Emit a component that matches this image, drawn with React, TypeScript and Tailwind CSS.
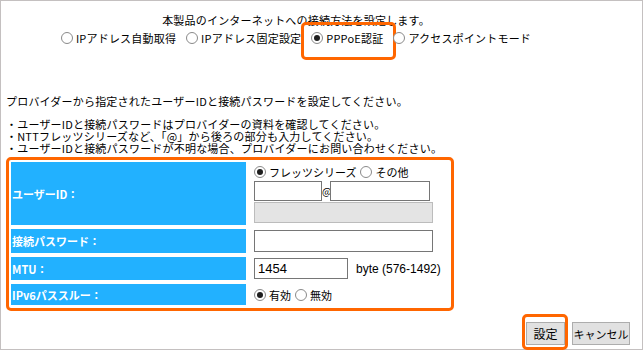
import React from "react";

function Radio({ checked }: { checked?: boolean }) {
  return (
    <span className="flex h-[12px] w-[12px] shrink-0 items-center justify-center rounded-full border border-[#8a8a8a] bg-white">
      {checked && <span className="h-[6px] w-[6px] rounded-full bg-[#1e1e1e]" />}
    </span>
  );
}

function Option({ label, checked }: { label: string; checked?: boolean }) {
  return (
    <span className="flex items-center gap-[3px] whitespace-nowrap">
      <Radio checked={checked} />
      <span>{label}</span>
    </span>
  );
}

const modes = [
  { label: "IPアドレス自動取得" },
  { label: "IPアドレス固定設定" },
  { label: "PPPoE認証", checked: true, mark: true },
  { label: "アクセスポイントモード" },
];

function Row({ label, h, children }: { label: string; h: string; children: React.ReactNode }) {
  return (
    <div className={`flex ${h}`}>
      <div className="flex w-[235px] shrink-0 items-center bg-[#22b1ff] pl-[1px] font-bold text-white">
        {label}
      </div>
      <div className="flex flex-1 flex-col justify-center pl-[8px]">{children}</div>
    </div>
  );
}

export default function App() {
  return (
    <div className="h-[350px] w-[643px] border border-[#c4c0c0] bg-white font-['Noto_Sans_CJK_JP',sans-serif] text-[11px] leading-[12px] tracking-[0.2px] text-black">
      <div className="w-[590px] pt-[13px] text-center">本製品のインターネットへの接続方法を設定します。</div>
      <div className="mt-[4px] flex h-[16px] w-[590px] items-center justify-center gap-[10px]">
        {modes.map((m) => (
          <span key={m.label} className="relative">
            <Option label={m.label} checked={m.checked} />
            {m.mark && (
              <span className="absolute -left-[10px] -top-[10px] h-[38px] w-[95px] rounded-[5px] border-[3px] border-[#ff6600]" />
            )}
          </span>
        ))}
      </div>

      <p className="mt-[49px] pl-[5px]">プロバイダーから指定されたユーザーIDと接続パスワードを設定してください。</p>
      <ul className="mt-[11px] pl-[5px]">
        <li>・ユーザーIDと接続パスワードはプロバイダーの資料を確認してください。</li>
        <li>・NTTフレッツシリーズなど、「@」から後ろの部分も入力してください。</li>
        <li>・ユーザーIDと接続パスワードが不明な場合、プロバイダーにお問い合わせください。</li>
      </ul>

      <div className="ml-[5px] mt-[3px] flex w-[448px] flex-col gap-[4px] rounded-[5px] border-[3px] border-[#ff6600] px-[2px] pb-[3px] pt-[2px] tracking-normal">
        <Row label="ユーザーID：" h="h-[63px]">
          <div className="flex h-[16px] items-center gap-[4px]">
            <Option label="フレッツシリーズ" checked />
            <Option label="その他" />
          </div>
          <div className="mt-[1px] flex items-center">
            <span className="h-[20px] w-[68px] border border-[#767676] bg-white" />
            <span className="w-[8px] text-center text-[10px]">@</span>
            <span className="h-[20px] w-[100px] border border-[#767676] bg-white" />
          </div>
          <span className="mt-[1px] h-[21px] w-[179px] border border-[#bcbcbc] bg-[#e4e4e4]" />
        </Row>
        <Row label="接続パスワード：" h="h-[24px]">
          <span className="h-[22px] w-[179px] border border-[#767676] bg-white" />
        </Row>
        <Row label="MTU：" h="h-[23px]">
          <div className="flex items-center">
            <span className="flex h-[21px] w-[94px] items-center border border-[#767676] bg-white pl-[3px] font-['Liberation_Sans',sans-serif] text-[13px]">
              1454
            </span>
            <span className="ml-[8px] font-['Liberation_Sans',sans-serif] text-[12px]">byte (576-1492)</span>
          </div>
        </Row>
        <Row label="IPv6パススルー：" h="h-[21px]">
          <div className="flex items-center gap-[4px]">
            <Option label="有効" checked />
            <Option label="無効" />
          </div>
        </Row>
      </div>

      <div className="mt-[11px] flex justify-end gap-[7px] pr-[12px] tracking-normal">
        <span className="relative">
          <button className="h-[23px] w-[39px] border border-[#adadad] bg-[#e1e1e1] p-0 text-[12px]">設定</button>
          <span className="absolute -left-[4px] -top-[8px] h-[36px] w-[46px] rounded-[5px] border-[3px] border-[#ff6600]" />
        </span>
        <button className="h-[23px] w-[58px] whitespace-nowrap border border-[#adadad] bg-[#e1e1e1] p-0 text-[11px]">キャンセル</button>
      </div>
    </div>
  );
}
